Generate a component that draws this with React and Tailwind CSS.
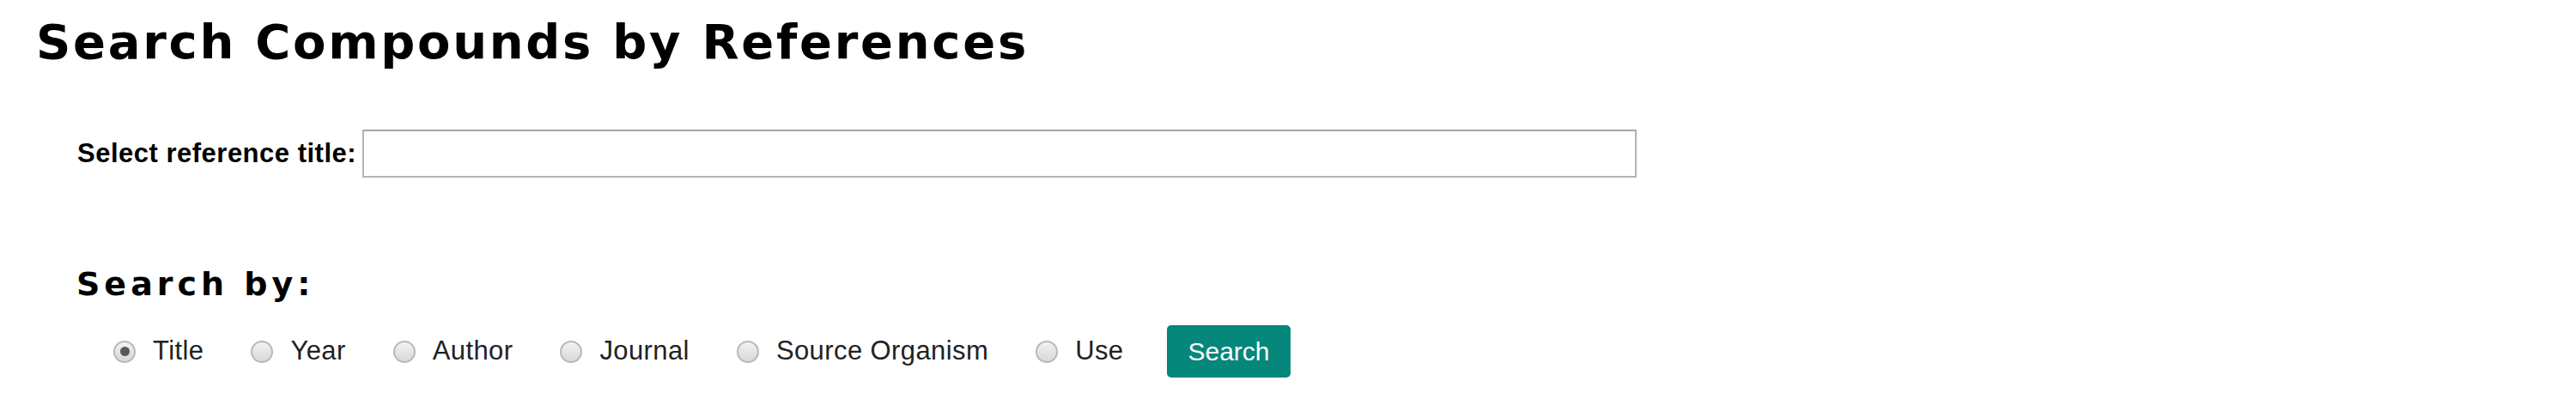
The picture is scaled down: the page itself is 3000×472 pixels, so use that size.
import { useState } from 'react';

// Search by references form
const OPTIONS = ['Title', 'Year', 'Author', 'Journal', 'Source Organism', 'Use'];

function Radio({ checked }) {
  return (
    <span className="flex h-[26px] w-[26px] shrink-0 items-center justify-center rounded-full border-2 border-[#b9b9b9] bg-gradient-to-b from-[#f2f2f2] to-[#d8d8d8]">
      {checked && <span className="h-[11px] w-[11px] rounded-full bg-[#5a5a5a]" />}
    </span>
  );
}

export default function App() {
  const [by, setBy] = useState('Title');

  return (
    <div className="h-[472px] w-full bg-white pl-[42px] text-black">
      {/* Page title */}
      <h1 className="pt-[16px] font-['DejaVu_Sans',Verdana,sans-serif] text-[56px] font-bold leading-[65px] tracking-[2.7px]">
        Search Compounds by References
      </h1>

      {/* Reference title input */}
      <div className="mt-[70px] flex h-[56px] items-center pl-[48px]">
        <label className="font-['Liberation_Sans',Arial,sans-serif] text-[31px] font-bold tracking-[0.5px]">
          Select reference title:
        </label>
        <input
          type="text"
          className="ml-[7px] h-[56px] w-[1484px] border-2 border-[#b4b4b4] border-t-[#a6a6a6] bg-white outline-none"
        />
      </div>

      {/* Search by */}
      <h2 className="mt-[102px] pl-[47px] font-['DejaVu_Sans',Verdana,sans-serif] text-[38px] font-bold leading-[45px] tracking-[5px]">
        Search by:
      </h2>

      <div className="mt-[25px] flex h-[61px] items-center pl-[90px] font-['Liberation_Sans',Arial,sans-serif] text-[31px] tracking-[0.4px] text-[#222]">
        {OPTIONS.map((opt) => (
          <label
            key={opt}
            onClick={() => setBy(opt)}
            className="mr-[55px] flex cursor-pointer items-center"
          >
            <Radio checked={by === opt} />
            <span className="ml-[20px]">{opt}</span>
          </label>
        ))}
        <button className="-ml-[4px] h-[61px] rounded-[5px] bg-[#06877b] px-[24px] text-[30px] tracking-normal text-white">
          Search
        </button>
      </div>
    </div>
  );
}
